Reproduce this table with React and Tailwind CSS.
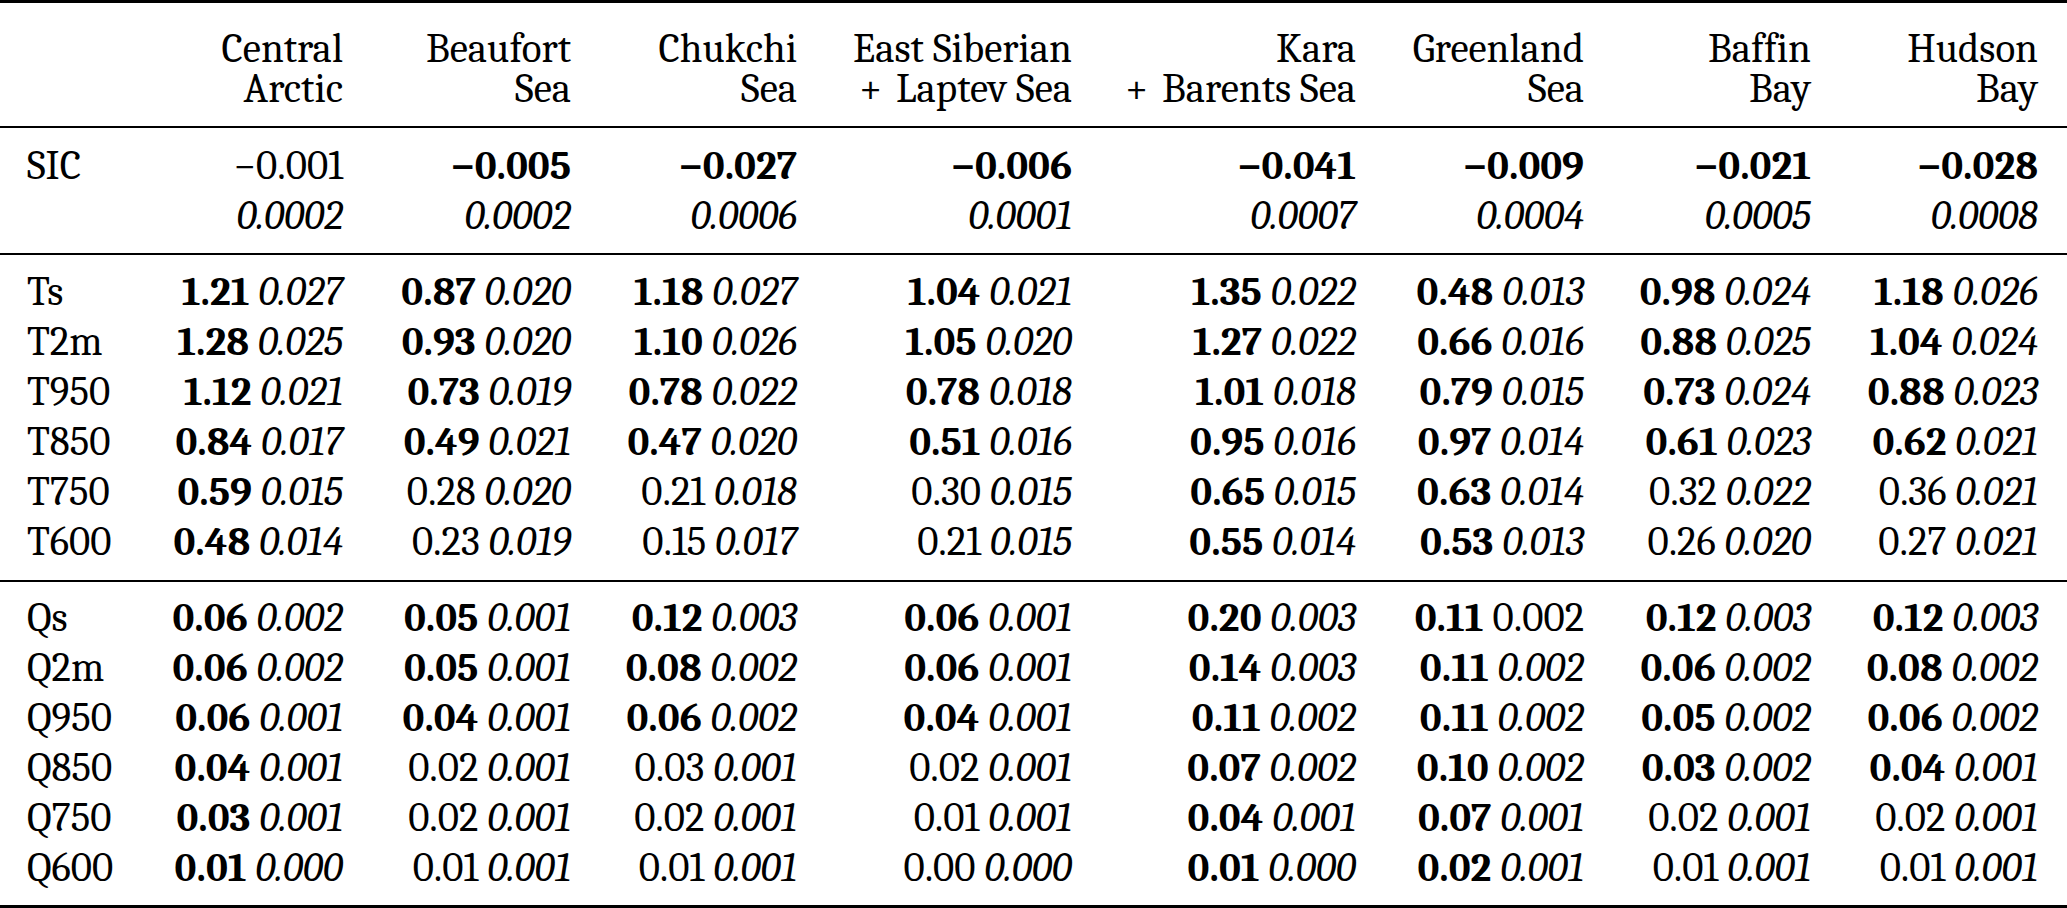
import React from "react";

const heads = [
  ["Central", "Arctic"],
  ["Beaufort", "Sea"],
  ["Chukchi", "Sea"],
  ["East Siberian", "Laptev Sea", true],
  ["Kara", "Barents Sea", true],
  ["Greenland", "Sea"],
  ["Baffin", "Bay"],
  ["Hudson", "Bay"],
];

const sicTop = [
  ["\u22120.001", false],
  ["\u22120.005", true],
  ["\u22120.027", true],
  ["\u22120.006", true],
  ["\u22120.041", true],
  ["\u22120.009", true],
  ["\u22120.021", true],
  ["\u22120.028", true],
];
const sicBot = ["0.0002", "0.0002", "0.0006", "0.0001", "0.0007", "0.0004", "0.0005", "0.0008"];

const tRows = [
  ["Ts", [["1.21", 1, "0.027"], ["0.87", 1, "0.020"], ["1.18", 1, "0.027"], ["1.04", 1, "0.021"], ["1.35", 1, "0.022"], ["0.48", 1, "0.013"], ["0.98", 1, "0.024"], ["1.18", 1, "0.026"]]],
  ["T2m", [["1.28", 1, "0.025"], ["0.93", 1, "0.020"], ["1.10", 1, "0.026"], ["1.05", 1, "0.020"], ["1.27", 1, "0.022"], ["0.66", 1, "0.016"], ["0.88", 1, "0.025"], ["1.04", 1, "0.024"]]],
  ["T950", [["1.12", 1, "0.021"], ["0.73", 1, "0.019"], ["0.78", 1, "0.022"], ["0.78", 1, "0.018"], ["1.01", 1, "0.018"], ["0.79", 1, "0.015"], ["0.73", 1, "0.024"], ["0.88", 1, "0.023"]]],
  ["T850", [["0.84", 1, "0.017"], ["0.49", 1, "0.021"], ["0.47", 1, "0.020"], ["0.51", 1, "0.016"], ["0.95", 1, "0.016"], ["0.97", 1, "0.014"], ["0.61", 1, "0.023"], ["0.62", 1, "0.021"]]],
  ["T750", [["0.59", 1, "0.015"], ["0.28", 0, "0.020"], ["0.21", 0, "0.018"], ["0.30", 0, "0.015"], ["0.65", 1, "0.015"], ["0.63", 1, "0.014"], ["0.32", 0, "0.022"], ["0.36", 0, "0.021"]]],
  ["T600", [["0.48", 1, "0.014"], ["0.23", 0, "0.019"], ["0.15", 0, "0.017"], ["0.21", 0, "0.015"], ["0.55", 1, "0.014"], ["0.53", 1, "0.013"], ["0.26", 0, "0.020"], ["0.27", 0, "0.021"]]],
];

const qRows = [
  ["Qs", [["0.06", 1, "0.002"], ["0.05", 1, "0.001"], ["0.12", 1, "0.003"], ["0.06", 1, "0.001"], ["0.20", 1, "0.003"], ["0.11", 1, "0.002", true], ["0.12", 1, "0.003"], ["0.12", 1, "0.003"]]],
  ["Q2m", [["0.06", 1, "0.002"], ["0.05", 1, "0.001"], ["0.08", 1, "0.002"], ["0.06", 1, "0.001"], ["0.14", 1, "0.003"], ["0.11", 1, "0.002"], ["0.06", 1, "0.002"], ["0.08", 1, "0.002"]]],
  ["Q950", [["0.06", 1, "0.001"], ["0.04", 1, "0.001"], ["0.06", 1, "0.002"], ["0.04", 1, "0.001"], ["0.11", 1, "0.002"], ["0.11", 1, "0.002"], ["0.05", 1, "0.002"], ["0.06", 1, "0.002"]]],
  ["Q850", [["0.04", 1, "0.001"], ["0.02", 0, "0.001"], ["0.03", 0, "0.001"], ["0.02", 0, "0.001"], ["0.07", 1, "0.002"], ["0.10", 1, "0.002"], ["0.03", 1, "0.002"], ["0.04", 1, "0.001"]]],
  ["Q750", [["0.03", 1, "0.001"], ["0.02", 0, "0.001"], ["0.02", 0, "0.001"], ["0.01", 0, "0.001"], ["0.04", 1, "0.001"], ["0.07", 1, "0.001"], ["0.02", 0, "0.001"], ["0.02", 0, "0.001"]]],
  ["Q600", [["0.01", 1, "0.000"], ["0.01", 0, "0.001"], ["0.01", 0, "0.001"], ["0.00", 0, "0.000"], ["0.01", 1, "0.000"], ["0.02", 1, "0.001"], ["0.01", 0, "0.001"], ["0.01", 0, "0.001"]]],
];

const GRID = "grid grid-cols-[120px_223px_228px_226px_275px_284px_228px_227px_227px] pr-[29px]";

function Cell({ c }) {
  const [v, b, sd, upright] = c;
  return (
    <div className="text-right whitespace-nowrap">
      <span className={b ? "font-bold" : ""}>{v}</span>{" "}
      <span className={upright ? "" : "italic"}>{sd}</span>
    </div>
  );
}

function Section({ rows, className }) {
  return (
    <div className={`${GRID} leading-[50px] ${className}`}>
      {rows.map(([label, cells]) => (
        <React.Fragment key={label}>
          <div className="pl-[27px]">{label}</div>
          {cells.map((c, i) => (
            <Cell key={i} c={c} />
          ))}
        </React.Fragment>
      ))}
    </div>
  );
}

export default function App() {
  return (
    <div className="w-[2067px] h-[908px] bg-white text-black font-serif [font-family:Liberation_Serif,serif] text-[41px] overflow-hidden">
      <div className={`${GRID} leading-[40px] border-t-[3px] border-b-2 border-black pt-[26px] pb-[17px]`}>
        <div />
        {heads.map(([a, b, plus]) => (
          <div key={a} className="text-right whitespace-nowrap">
            <div>{a}</div>
            <div>
              {plus ? <span className="pr-[5px]">+</span> : null}
              {plus ? " " : null}
              {b}
            </div>
          </div>
        ))}
      </div>
      <div className={`${GRID} leading-[50px] border-b-2 border-black pt-[13px] pb-[12px]`}>
        <div className="pl-[27px]">SIC</div>
        {sicTop.map(([v, b], i) => (
          <div key={i} className={`text-right ${b ? "font-bold" : ""}`}>{v}</div>
        ))}
        <div />
        {sicBot.map((v, i) => (
          <div key={i} className="text-right italic">{v}</div>
        ))}
      </div>
      <Section rows={tRows} className="border-b-2 border-black pt-[12px] pb-[13px]" />
      <Section rows={qRows} className="border-b-[3px] border-black pt-[11px] pb-[12px]" />
    </div>
  );
}
